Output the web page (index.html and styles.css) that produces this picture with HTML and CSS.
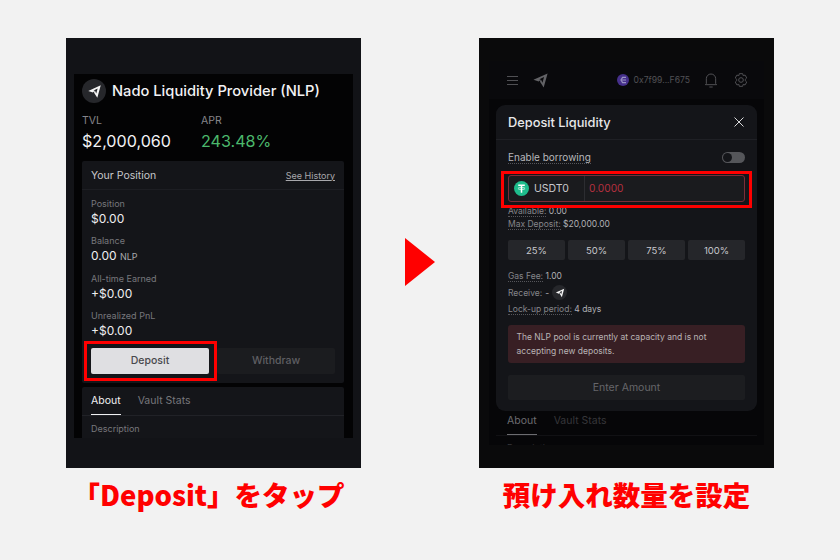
FILE: index.html
```html
<!DOCTYPE html>
<html lang="en">
    <head>
        <meta charset="UTF-8" />
        <meta name="viewport" content="width=device-width, initial-scale=1.0" />
        <title>Nado Liquidity Provider</title>
        <link rel="stylesheet" href="styles.css">
    </head>

    <body>
        <svg class="sprites" width="0" height="0">
            <symbol id="nado" viewBox="0 0 24 24">
                <path fill-rule="evenodd" d="M22 2 L2 11 L9.500 13.500 L12 11.200 L11.300 13.800 L16.500 22 Z M17 7.200 L10.500 10.300 L13 11.300 L14.800 15.200 Z" />
            </symbol>
        </svg>

        <div class="page">
            <section class="step">
                <div class="phone phone--light">
                    <div class="panel">
                        <div class="title">
                            <span class="logo"><svg><use href="#nado" /></svg></span>
                            <h1>Nado Liquidity Provider (NLP)</h1>
                        </div>

                        <div class="stats">
                            <div class="stat">
                                <div class="stat__label">TVL</div>
                                <div class="stat__value">$2,000,060</div>
                            </div>
                            <div class="stat">
                                <div class="stat__label">APR</div>
                                <div class="stat__value stat__value--green">243.48%</div>
                            </div>
                        </div>

                        <div class="card">
                            <div class="card__head">
                                <span>Your Position</span>
                                <a class="history">See History</a>
                            </div>
                            <div class="rows">
                                <div class="row">
                                    <div class="row__label">Position</div>
                                    <div class="row__value">$0.00</div>
                                </div>
                                <div class="row">
                                    <div class="row__label">Balance</div>
                                    <div class="row__value">0.00 <small>NLP</small></div>
                                </div>
                                <div class="row">
                                    <div class="row__label">All-time Earned</div>
                                    <div class="row__value">+$0.00</div>
                                </div>
                                <div class="row">
                                    <div class="row__label">Unrealized PnL</div>
                                    <div class="row__value">+$0.00</div>
                                </div>
                            </div>
                            <div class="actions">
                                <button class="action action--on">Deposit</button>
                                <button class="action">Withdraw</button>
                                <span class="mark mark--deposit"></span>
                            </div>
                        </div>

                        <div class="card card--tabs">
                            <div class="tabs">
                                <span class="tab tab--active">About</span>
                                <span class="tab">Vault Stats</span>
                            </div>
                            <div class="description">Description</div>
                        </div>
                    </div>
                </div>
                <p class="caption caption--left">「Deposit」をタップ</p>
            </section>

            <div class="arrow"></div>

            <section class="step">
                <div class="phone phone--dim">
                    <div class="panel panel--dim">
                        <nav class="nav">
                            <span class="burger"><i></i><i></i><i></i></span>
                            <svg class="nav__logo"><use href="#nado" /></svg>
                            <span class="wallet">
                                <svg class="wallet__icon" viewBox="0 0 12 12">
                                    <circle cx="6" cy="6" r="6" fill="#46308c" />
                                    <path d="M9 3.400H5.600L4 6l1.600 2.600H9M5 6h4" fill="none" stroke="#9a94c4" stroke-width="1.200" />
                                </svg>
                                0x7f99...F675
                            </span>
                            <svg class="nav__icon" viewBox="0 0 24 24">
                                <path d="M5 17.500V10a7 7 0 0 1 14 0v7.500l1.500 1.500h-17zM9.500 22.500h5" />
                            </svg>
                            <svg class="nav__icon" viewBox="0 0 24 24">
                                <path d="M9.500 2.500h5l.8 3 2.800-.9 2.500 4.300-2.200 2.100v2l2.200 2.100-2.500 4.300-2.800-.9-.8 3h-5l-.8-3-2.800.9-2.500-4.300 2.200-2.100v-2L3.400 8.900l2.500-4.300 2.800.9z" />
                                <circle cx="12" cy="12" r="3.500" />
                            </svg>
                        </nav>

                        <div class="tabs tabs--dim">
                            <span class="tab tab--active">About</span>
                            <span class="tab">Vault Stats</span>
                        </div>
                        <div class="description description--dim">Description</div>
                    </div>

                    <div class="modal">
                        <div class="modal__head">
                            <h2>Deposit Liquidity</h2>
                            <svg class="close" viewBox="0 0 10 10">
                                <path d="M.5.500l9 9M9.500.500l-9 9" />
                            </svg>
                        </div>

                        <div class="modal__body">
                            <div class="borrow">
                                <span class="dotted">Enable borrowing</span>
                                <span class="toggle"></span>
                            </div>

                            <div class="amount">
                                <span class="amount__token">
                                    <svg class="usdt" viewBox="0 0 16 16">
                                        <circle cx="8" cy="8" r="8" fill="#1ebc8c" />
                                        <path d="M4.500 4.500h7M8 4.500v8" fill="none" stroke="#fff" stroke-width="1.600" />
                                        <ellipse cx="8" cy="8" rx="3.800" ry="1.100" fill="none" stroke="#fff" stroke-width=".7" />
                                    </svg>
                                    USDT0
                                </span>
                                <span class="amount__value">0.0000</span>
                            </div>

                            <div class="limits">
                                <div><span class="dotted">Available:</span> <b>0.00</b></div>
                                <div><span class="dotted">Max Deposit:</span> <b>$20,000.00</b></div>
                            </div>

                            <div class="percents">
                                <button class="percent">25%</button>
                                <button class="percent">50%</button>
                                <button class="percent">75%</button>
                                <button class="percent">100%</button>
                            </div>

                            <div class="details">
                                <div><span class="dotted">Gas Fee:</span> <b>1.00</b></div>
                                <div class="receive">
                                    <span>Receive:</span> <b>-</b>
                                    <span class="logo logo--small"><svg><use href="#nado" /></svg></span>
                                </div>
                                <div><span class="dotted">Lock-up period:</span> <b>4 days</b></div>
                            </div>

                            <div class="alert">The NLP pool is currently at capacity and is not accepting new deposits.</div>

                            <button class="submit">Enter Amount</button>
                        </div>
                    </div>

                    <span class="mark mark--amount"></span>
                </div>
                <p class="caption">預け入れ数量を設定</p>
            </section>
        </div>
    </body>
</html>
```

FILE: styles.css
```css
* {
    box-sizing: border-box;
}

html,
body {
    margin: 0;
    padding: 0;
}

body {
    background: #f2f2f2;
    font-family: "Inter", "Liberation Sans", sans-serif;
    overflow: hidden;
}

h1,
h2,
p {
    margin: 0;
    font-weight: normal;
}

button {
    border: 0;
    padding: 0;
    font-family: inherit;
}

.sprites {
    position: absolute;
}

.page {
    display: flex;
    width: 840px;
    height: 560px;
    padding: 38px 66px 0;
}

.step {
    width: 295px;
}

.arrow {
    width: 0;
    height: 0;
    margin: 200px 44px 0;
    border-left: 30px solid #ff0000;
    border-top: 24px solid transparent;
    border-bottom: 24px solid transparent;
}

.caption {
    margin-top: 7px;
    text-align: center;
    color: #ff0000;
    font-family: "Noto Sans CJK JP", sans-serif;
    font-size: 27.500px;
    line-height: 38px;
    font-weight: 900;
    white-space: nowrap;
}

.caption--left {
    padding-right: 10px;
}

/* phones */
.phone {
    position: relative;
    height: 430px;
    overflow: hidden;
}

.phone--light {
    padding: 36px 8px 30px;
    background: #121317;
}

.phone--dim {
    padding: 23px 10px 23px;
    background: #0a0a0b;
}

.panel {
    height: 100%;
    padding: 0 9px 0 8px;
    overflow: hidden;
    background: #030304;
}

.panel--dim {
    padding: 0;
    background: #060608;
}

.title {
    display: flex;
    align-items: center;
    gap: 6px;
    margin-top: 5px;
}

.title h1 {
    font-size: 14.700px;
    line-height: 24px;
    font-weight: 500;
    color: #f2f2f4;
}

.logo {
    display: flex;
    align-items: center;
    justify-content: center;
    width: 24px;
    height: 24px;
    border-radius: 50%;
    background: #26272b;
}

.logo svg {
    width: 15px;
    height: 15px;
    fill: #f5f5f5;
}

.logo--small {
    width: 15px;
    height: 15px;
}

.logo--small svg {
    width: 10px;
    height: 10px;
}

.stats {
    display: flex;
    margin-top: 10px;
}

.stat {
    width: 119px;
}

.stat__label {
    font-size: 10.500px;
    line-height: 16px;
    color: #85858a;
}

.stat__value {
    font-size: 16.100px;
    line-height: 24px;
    color: #f2f2f4;
}

.stat__value--green {
    color: #4bb86c;
}

/* position card */
.card {
    margin-top: 8px;
    background: #141519;
    border-radius: 2px;
}

.card--tabs {
    margin-top: 4px;
    height: 60px;
}

.card__head {
    display: flex;
    justify-content: space-between;
    align-items: center;
    height: 29px;
    padding: 0 9px;
    border-bottom: 1px solid #1d1e23;
    font-size: 10.500px;
    color: #c8c8cc;
}

.history {
    font-size: 9px;
    color: #a8a8ac;
    text-decoration: underline;
}

.rows {
    padding: 6px 9px 0;
}

.row {
    height: 37.400px;
    padding-top: 1px;
}

.row__label {
    font-size: 9px;
    line-height: 13px;
    color: #77777c;
}

.row__value {
    margin-top: 1px;
    font-size: 12px;
    line-height: 15px;
    color: #eeeef0;
}

.row__value small {
    font-size: 9px;
    color: #a8a8ac;
}

.actions {
    position: relative;
    display: flex;
    gap: 8px;
    padding: 2px 9px 9px;
}

.action {
    flex: 1;
    height: 26px;
    border-radius: 2px;
    background: #1b1c1f;
    font-size: 10.500px;
    font-weight: 500;
    color: #5f5f63;
}

.action--on {
    background: #dfdfe2;
    color: #48484c;
}

/* red highlight boxes, they sit over the page */
.mark {
    position: absolute;
    border: 3px solid #ff0000;
}

.mark--deposit {
    left: 2px;
    top: -5px;
    width: 133px;
    height: 40px;
}

.mark--amount {
    left: 22px;
    top: 133px;
    width: 251px;
    height: 37px;
}

/* tabs */
.tabs {
    display: flex;
    gap: 17px;
    height: 29px;
    padding: 0 9px;
    border-bottom: 1px solid #212227;
    font-size: 10.500px;
}

.tab {
    height: 28px;
    line-height: 27px;
    color: #77777c;
}

.tab--active {
    color: #f0f0f2;
    border-bottom: 1px solid #f0f0f2;
}

.description {
    padding: 6px 9px;
    font-size: 9px;
    line-height: 13px;
    color: #77777c;
}

.tabs--dim {
    margin: 308px 7px 0;
    padding: 0 11px;
    border-bottom-color: #111114;
}

.tabs--dim .tab {
    color: #36363a;
}

.tabs--dim .tab--active {
    color: #6c6c70;
    border-bottom-color: #6c6c70;
}

.description--dim {
    color: #36363a;
    padding: 5px 18px;
}

/* dimmed nav */
.nav {
    display: flex;
    align-items: center;
    height: 38px;
    padding: 0 15px 0 18px;
    background: #09090c;
}

.burger {
    display: flex;
    flex-direction: column;
    gap: 3px;
    width: 11px;
}

.burger i {
    height: 1px;
    background: #505054;
}

.nav__logo {
    width: 17px;
    height: 17px;
    margin-left: 14px;
    fill: #626266;
}

.wallet {
    display: flex;
    align-items: center;
    gap: 5px;
    margin-left: auto;
    margin-right: -1px;
    font-size: 8.600px;
    color: #515155;
}

.wallet__icon {
    width: 12px;
    height: 12px;
}

.nav__icon {
    width: 16px;
    height: 16px;
    margin-left: 14px;
    fill: none;
    stroke: #505054;
    stroke-width: 1.500;
}

/* modal over the dimmed page */
.modal {
    position: absolute;
    left: 17px;
    top: 67px;
    width: 261px;
    height: 306px;
    border-radius: 9px;
    background: #141519;
    color: #e8e8ea;
}

.modal__head {
    display: flex;
    justify-content: space-between;
    align-items: center;
    height: 35px;
    padding: 0 13px 0 12px;
    border-bottom: 1px solid #1f2025;
}

.modal__head h2 {
    font-size: 12.800px;
    font-weight: 500;
}

.close {
    width: 10px;
    height: 10px;
    fill: none;
    stroke: #d8d8da;
    stroke-width: 1;
}

.modal__body {
    padding: 0 12px;
}

.dotted {
    border-bottom: 1px dotted #55555a;
}

.borrow {
    display: flex;
    justify-content: space-between;
    align-items: center;
    height: 35px;
    font-size: 10px;
    color: #b8b8bc;
}

.toggle {
    position: relative;
    width: 23px;
    height: 11px;
    border-radius: 6px;
    background: #55565a;
}

.toggle:after {
    content: "";
    position: absolute;
    left: 1px;
    top: 1px;
    width: 9px;
    height: 9px;
    border-radius: 50%;
    background: #141519;
}

.amount {
    display: flex;
    height: 27px;
    border: 1px solid #7a2e38;
    border-radius: 3px;
    background: #1a1b1e;
    font-size: 10.500px;
}

.amount__token {
    display: flex;
    align-items: center;
    gap: 5px;
    width: 76px;
    padding-left: 5px;
    border-right: 1px solid #2c2d31;
    color: #c8c8cc;
}

.usdt {
    width: 15px;
    height: 15px;
}

.amount__value {
    padding-left: 4px;
    font-size: 10.200px;
    line-height: 25px;
    color: #b4303f;
}

.limits,
.details {
    font-size: 8.500px;
    color: #85858a;
}

.limits b,
.details b {
    font-weight: normal;
    color: #b0b0b4;
}

.limits {
    margin-top: 3px;
    line-height: 13px;
}

.percents {
    display: flex;
    gap: 3px;
    margin-top: 9px;
}

.percent {
    flex: 1;
    height: 20px;
    border-radius: 2px;
    background: #25262a;
    font-size: 9.500px;
    color: #c8c8cc;
}

.details {
    margin-top: 8px;
    line-height: 16.500px;
}

.receive {
    display: flex;
    align-items: center;
    gap: 3px;
    height: 16.500px;
}

.alert {
    margin-top: 7px;
    height: 38px;
    padding: 5px 8.500px;
    border-radius: 3px;
    background: #381f24;
    font-size: 8.500px;
    line-height: 14px;
    color: #b8b4b5;
}

.submit {
    display: block;
    width: 100%;
    height: 25px;
    margin-top: 12px;
    border-radius: 2px;
    background: #1c1d20;
    font-size: 10.500px;
    color: #66666a;
}
```
